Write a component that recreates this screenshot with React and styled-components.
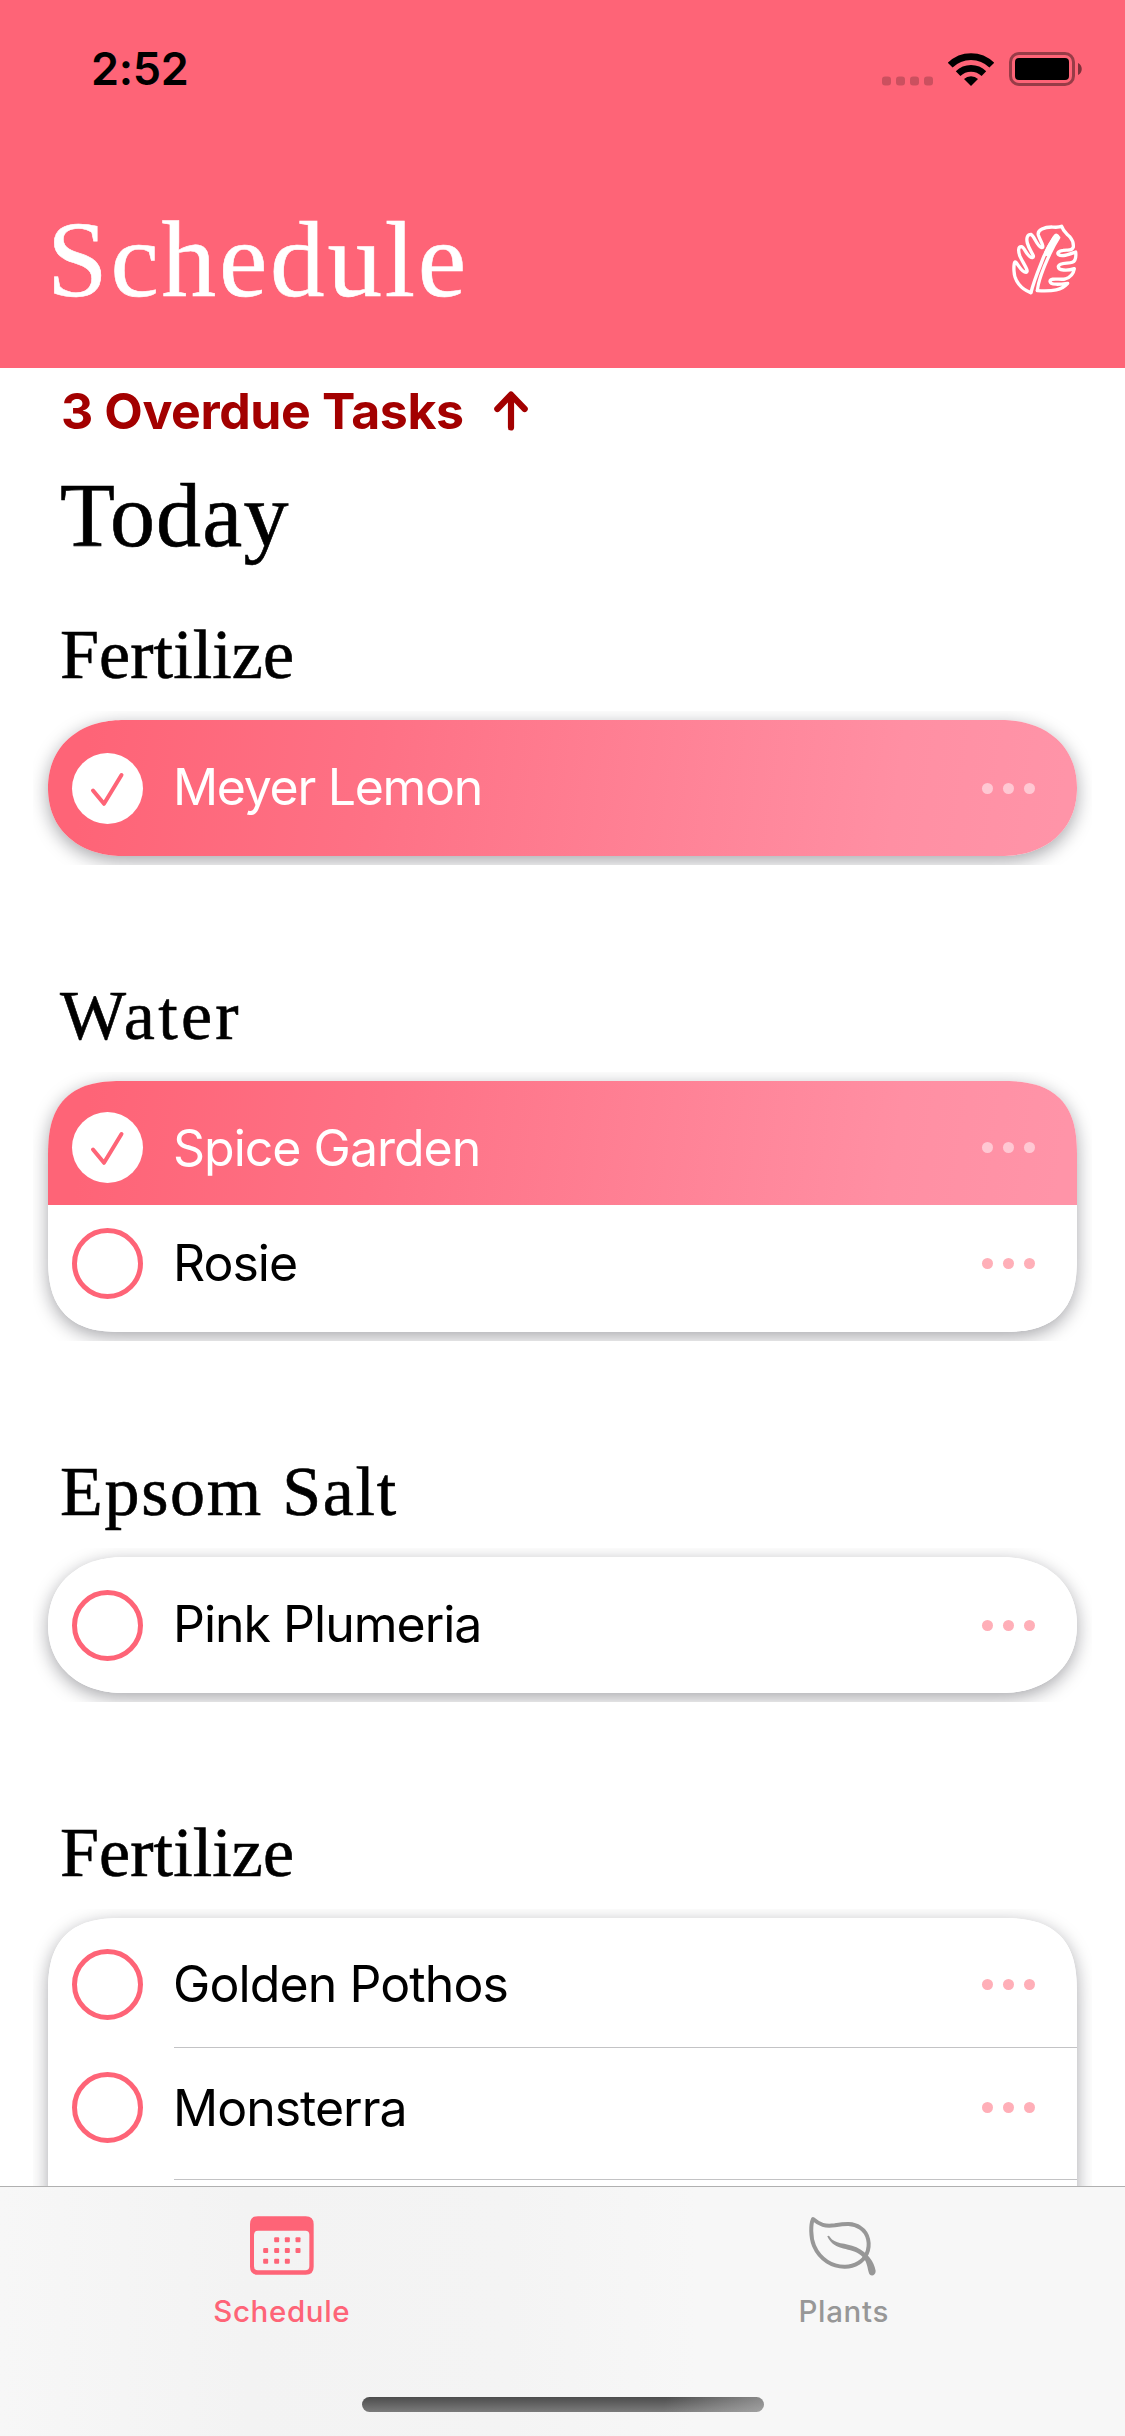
import React from 'react';
import styled, { createGlobalStyle, css } from 'styled-components';

const PINK = '#fe6477';
const SANS = 'Inter, "Liberation Sans", sans-serif';
const SERIF = '"Liberation Serif", "Noto Serif", serif';

const GlobalStyle = createGlobalStyle`
  *, *::before, *::after { box-sizing: border-box; }
  body { margin: 0; background: #fff; font-family: ${SANS}; }
  h1, h2, h3 { margin: 0; font-weight: 400; font-family: ${SERIF}; -webkit-text-stroke: 0.6px currentColor; }
  svg { display: block; flex: none; }
`;

const Screen = styled.div`
  width: 1125px;
  height: 2436px;
  display: flex;
  flex-direction: column;
  overflow: hidden;
  background: #fff;
`;

const Header = styled.header`
  flex: none;
  height: 368px;
  background: ${PINK};
`;

const StatusBar = styled.div`
  height: 137px;
  padding: 0 42px 0 91px;
  display: flex;
  align-items: center;
  justify-content: space-between;
`;

const Clock = styled.span`
  font-size: 45px;
  font-weight: 600;
  letter-spacing: -0.3px;
  color: #000;
`;

const StatusIcons = styled.div`
  display: flex;
  align-items: center;
  gap: 15px;
`;

const TitleBar = styled.div`
  height: 231px;
  padding: 14px 45px 0 47px;
  display: flex;
  align-items: center;
  justify-content: space-between;
`;

const Title = styled.h1`
  font-size: 109px;
  line-height: 120px;
  letter-spacing: 2.8px;
  color: #fff;
`;

const Content = styled.main`
  flex: none;
  height: 1818px;
  overflow: hidden;
`;

const Overdue = styled.div`
  height: 86px;
  padding-left: 61px;
  display: flex;
  align-items: center;
  gap: 30px;
  color: #a30000;
`;

const OverdueText = styled.span`
  font-size: 50px;
  font-weight: 700;
  letter-spacing: -0.4px;
`;

const DayTitle = styled.h2`
  padding: 2px 0 0 60px;
  font-size: 90px;
  line-height: 120px;
  letter-spacing: 1.2px;
  margin-bottom: 37px;
`;

const Section = styled.section`
  padding: 2px 48px 0;
  margin-bottom: 118px;
`;

const SectionTitle = styled.h3`
  padding: 0 0 25px 12px;
  font-size: 70px;
  line-height: 80px;
  letter-spacing: ${(p) => p.$tracking || 0}px;
`;

const Card = styled.div`
  overflow: hidden;
  border-radius: 60px;
  background: #fff;
  @supports (corner-shape: superellipse(1.4)) {
    ${(p) => p.$pill
    ? css`
        border-radius: 76px / 68px;
        corner-shape: superellipse(1.12);
      `
    : css`
        border-radius: 76px;
        corner-shape: superellipse(1.42);
      `}
  }
  box-shadow: 0 5px 18px rgba(10, 10, 22, 0.36);
  clip-path: inset(-9px -15px -9px -15px);
`;

const Row = styled.div`
  display: flex;
  align-items: center;
  height: ${(p) => p.$h}px;
  padding: ${(p) => p.$top || 0}px 42px ${(p) => p.$bottom || 0}px 24px;
  color: ${(p) => (p.$done ? '#fff' : '#000')};
  background: ${(p) => (p.$done ? 'linear-gradient(98deg, #fe6477 4%, #fe7185 32%, #ff8fa3 82%, #ff94a8 98%)' : '#fff')};
`;

const Check = styled.span`
  flex: none;
  width: 71px;
  height: 71px;
  border-radius: 50%;
  border: ${(p) => (p.$done ? '0' : `5px solid ${PINK}`)};
  background: #fff;
`;

const Name = styled.span`
  flex: 1;
  margin: 0 0 ${(p) => p.$lift || 0}px 30px;
  font-size: 50px;
  line-height: 60px;
  letter-spacing: ${(p) => p.$tracking || -1}px;
`;

const More = styled.span`
  display: flex;
  gap: 10px;
`;

const Dot = styled.i`
  width: 11px;
  height: 11px;
  border-radius: 50%;
  background: ${(p) => (p.$done ? '#ffc8d3' : '#ffafb8')};
`;

const Divider = styled.div`
  height: 1px;
  margin-left: 126px;
  background: #c3c3c5;
`;

const TabBar = styled.nav`
  flex: none;
  height: 250px;
  border-top: 1px solid #b0b0b0;
  background: linear-gradient(90deg, #f7f7f7 0, #f3f3f3 22%, #f4f4f4 45%, #f7f7f7 62%, #f7f7f7 100%);
  display: flex;
  flex-direction: column;
  align-items: center;
`;

const Tabs = styled.div`
  width: 100%;
  height: 210px;
  display: grid;
  grid-template-columns: 1fr 1fr;
`;

const Tab = styled.div`
  padding: 29px 0 0 ${(p) => (p.$active ? 1 : 0)}px;
  display: flex;
  flex-direction: column;
  align-items: center;
  color: ${(p) => (p.$active ? PINK : '#979797')};
`;

const TabIcon = styled.span`
  height: 63px;
  padding-right: ${(p) => p.$shift || 0}px;
`;

const TabLabel = styled.span`
  margin-top: 12px;
  font-size: 29.5px;
  line-height: 40px;
  font-weight: 500;
  letter-spacing: 0.65px;
`;

const HomeIndicator = styled.div`
  width: 402px;
  height: 15px;
  border-radius: 8px;
  background: linear-gradient(100deg, transparent 75%, rgba(200, 200, 200, 0.5) 100%),
    linear-gradient(#4c4c4c, #7b7b7b);
`;

const Signal = () => (
  <svg width="51" height="34" fill="#000" fillOpacity="0.2">
    {[0, 14, 28, 42].map((x) => (
      <rect key={x} x={x} y="24.5" width="9" height="9" rx="3" />
    ))}
  </svg>
);

const Wifi = () => (
  <svg width="46" height="34" viewBox="0 0 46 34" fill="none" stroke="#000">
    <path d="M2.2 13.2A29.4 29.4 0 0 1 43.8 13.2" strokeWidth="6.8" />
    <path d="M10.1 21.6A18.5 18.5 0 0 1 35.9 21.6" strokeWidth="6.6" />
    <path d="M23 34L16 27A10 10 0 0 1 30 27Z" fill="#000" stroke="none" />
  </svg>
);

const Battery = () => (
  <svg width="74" height="34" viewBox="0 0 74 34">
    <rect x="1.5" y="1.5" width="63" height="31" rx="8.5" fill="none" stroke="#000" strokeOpacity="0.4" strokeWidth="3" />
    <rect x="6" y="6" width="54" height="22" rx="4" />
    <path d="M69 11C74 13 74 21 69 23Z" fillOpacity="0.5" />
  </svg>
);

const MonsteraIcon = () => (
  <svg width="70" height="74" viewBox="90 68 210 222" fill="none" stroke="#fff" strokeWidth="10" strokeLinejoin="round" strokeLinecap="round">
    <path d="M152 277C122 266 103 241 102 212C101 196 103 182 107 185C114 191 124 216 138 216C149 214 130 190 120 168C114 152 114 138 125 139C134 141 143 173 157 172C168 169 148 152 142 128C138 112 143 102 153 102C162 105 172 140 185 142C195 141 181 122 175 104C171 88 195 80 215 80C228 81 236 82 245 78C250 95 258 98 270 110C280 122 281 130 280 140C276 154 262 147 250 150C237 152 229 157 236 163C246 171 270 161 287 155C289 172 284 183 277 186C266 191 240 185 235 198C234 211 262 212 283 205C280 223 271 231 255 236C240 239 211 231 210 243C211 255 240 252 263 249C245 269 220 274 172 271" />
    <path d="M153 277C160 245 175 210 190 172Q202 142 222 112" />
    <path d="M172 270C176 235 196 190 210 160Q222 134 236 112" />
    <path d="M229 109Q212 136 201 158" strokeWidth="18" />
  </svg>
);

const ArrowUp = () => (
  <svg width="34" height="40" viewBox="0 0 34 40" fill="none" stroke="currentColor" strokeWidth="6.2" strokeLinecap="round" strokeLinejoin="round">
    <path d="M17 36.5V4M3.3 18L17 3.6L30.7 18" />
  </svg>
);

const CheckMark = () => (
  <svg width="71" height="71" fill="none" stroke={PINK} strokeWidth="4" strokeLinecap="round" strokeLinejoin="round">
    <path d="M21 37.5L32 50.8L49.5 22" />
  </svg>
);

const CalendarIcon = () => (
  <svg width="64" height="59" viewBox="210 139 192 176" fill="currentColor">
    <path
      fillRule="evenodd"
      d="M234 139H377Q401 139 401 163V291Q401 315 377 315H234Q210 315 210 291V163Q210 139 234 139ZM234 183Q222 183 222 195V289Q222 301 234 301H376Q388 301 388 289V195Q388 183 376 183Z"
    />
    {[[290, 210], [322, 210], [354, 210], [257, 242], [290, 242], [322, 242], [354, 242], [257, 274], [290, 274], [322, 274]].map(([x, y]) => (
      <rect key={`${x}-${y}`} x={x - 7.5} y={y - 7.5} width="15" height="15" rx="3" />
    ))}
  </svg>
);

const LeafIcon = () => (
  <svg width="69" height="61" viewBox="264 138 208 184" fill="none">
    <path
      d="M279 147C272 162 271 202 282 228C300 270 338 292 376 291C405 291 432 274 441 252C453 224 447 190 421 173C400 158 375 161 345 166C315 170 300 165 279 147Z"
      stroke="currentColor"
      strokeWidth="12"
      strokeLinejoin="round"
    />
    <path
      d="M322 199C325 196 328 197 330 201C345 224 375 217 410 232C445 249 463 275 468 303C469 320 450 323 447 308C442 285 439 269 424 257C395 230 344 247 322 199Z"
      fill="currentColor"
    />
  </svg>
);

function Task({ name, done, lift, tracking, ...size }) {
  return (
    <Row $done={done} $h={size.h} $top={size.top} $bottom={size.bottom}>
      <Check $done={done}>{done && <CheckMark />}</Check>
      <Name $lift={lift} $tracking={tracking}>{name}</Name>
      <More>
        <Dot $done={done} />
        <Dot $done={done} />
        <Dot $done={done} />
      </More>
    </Row>
  );
}

export default function App() {
  return (
    <>
      <GlobalStyle />
      <Screen>
        <Header>
          <StatusBar>
            <Clock>2:52</Clock>
            <StatusIcons>
              <Signal />
              <Wifi />
              <Battery />
            </StatusIcons>
          </StatusBar>
          <TitleBar>
            <Title>Schedule</Title>
            <MonsteraIcon />
          </TitleBar>
        </Header>

        <Content>
          <Overdue>
            <OverdueText>3 Overdue Tasks</OverdueText>
            <ArrowUp />
          </Overdue>
          <DayTitle>Today</DayTitle>

          <Section>
            <SectionTitle $tracking={0.1}>Fertilize</SectionTitle>
            <Card $pill>
              <Task name="Meyer Lemon" done h={136} top={1} lift={4} tracking={-1.3} />
            </Card>
          </Section>

          <Section>
            <SectionTitle $tracking={3.3}>Water</SectionTitle>
            <Card>
              <Task name="Spice Garden" done h={124} top={9} />
              <Task name="Rosie" h={127} bottom={10} lift={2} />
            </Card>
          </Section>

          <Section>
            <SectionTitle $tracking={1.7}>Epsom Salt</SectionTitle>
            <Card $pill>
              <Task name="Pink Plumeria" h={136} top={1} lift={4} />
            </Card>
          </Section>

          <Section>
            <SectionTitle $tracking={0.1}>Fertilize</SectionTitle>
            <Card>
              <Task name="Golden Pothos" h={129} top={4} lift={1} tracking={-0.9} />
              <Divider />
              <Task name="Monsterra" h={131} bottom={12} />
              <Divider />
              <Row $h={130} />
            </Card>
          </Section>
        </Content>

        <TabBar>
          <Tabs>
            <Tab $active>
              <TabIcon><CalendarIcon /></TabIcon>
              <TabLabel>Schedule</TabLabel>
            </Tab>
            <Tab>
              <TabIcon $shift={2}><LeafIcon /></TabIcon>
              <TabLabel>Plants</TabLabel>
            </Tab>
          </Tabs>
          <HomeIndicator />
        </TabBar>
      </Screen>
    </>
  );
}
